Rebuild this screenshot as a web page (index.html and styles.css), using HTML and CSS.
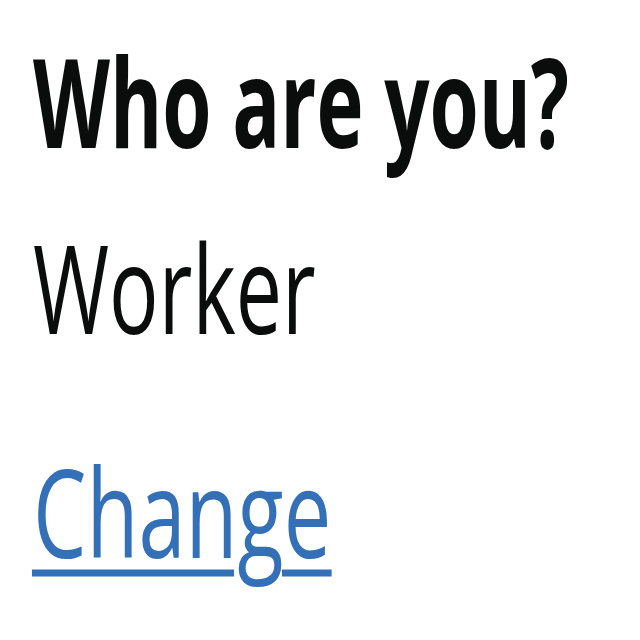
FILE: index.html
```html
<!DOCTYPE html>
<html lang="en">
<head>
<meta charset="utf-8">
<title>Who are you?</title>
<link rel="stylesheet" href="styles.css">
</head>
<body>
<dl class="summary">
  <dt class="row key">
    <svg class="line" width="600" height="160" viewBox="0 0 927 160" preserveAspectRatio="none">
      <text class="t bold" x="0" y="121.5">Who are you?</text>
    </svg>
  </dt>
  <dd class="row value">
    <svg class="line" width="600" height="160" viewBox="0 0 895 160" preserveAspectRatio="none">
      <text class="t" x="0" y="121.5">Worker</text>
    </svg>
  </dd>
  <dd class="row action">
    <a class="link" href="#">
      <svg class="line" width="600" height="160" viewBox="0 0 870 160" preserveAspectRatio="none">
        <text class="t link-text" x="0" y="121.5">Change</text>
        <rect class="uline" x="-1.5" y="133.5" width="293" height="7"></rect>
        <rect class="uline" x="361" y="133.5" width="72" height="7"></rect>
      </svg>
    </a>
  </dd>
</dl>
</body>
</html>
```
FILE: styles.css
```css
html, body {
  margin: 0;
  padding: 0;
  background: #ffffff;
}
body {
  width: 640px;
  height: 640px;
  overflow: hidden;
}
.summary {
  display: flex;
  flex-direction: column;
  margin: 0;
  padding: 26px 0 0 33px;
}
.row {
  margin: 0;
  height: 160px;
}
.line {
  display: block;
  overflow: visible;
}
.t {
  font-family: "Open Sans", "Noto Sans", sans-serif;
  font-size: 123px;
  fill: #0b0c0c;
}
.bold {
  font-weight: 700;
}
.value {
  margin-top: 26px;
}
.action {
  margin-top: 64px;
}
.link {
  display: block;
  text-decoration: none;
}
.link-text {
  fill: #3470b8;
}
.uline {
  fill: #3470b8;
}
```
